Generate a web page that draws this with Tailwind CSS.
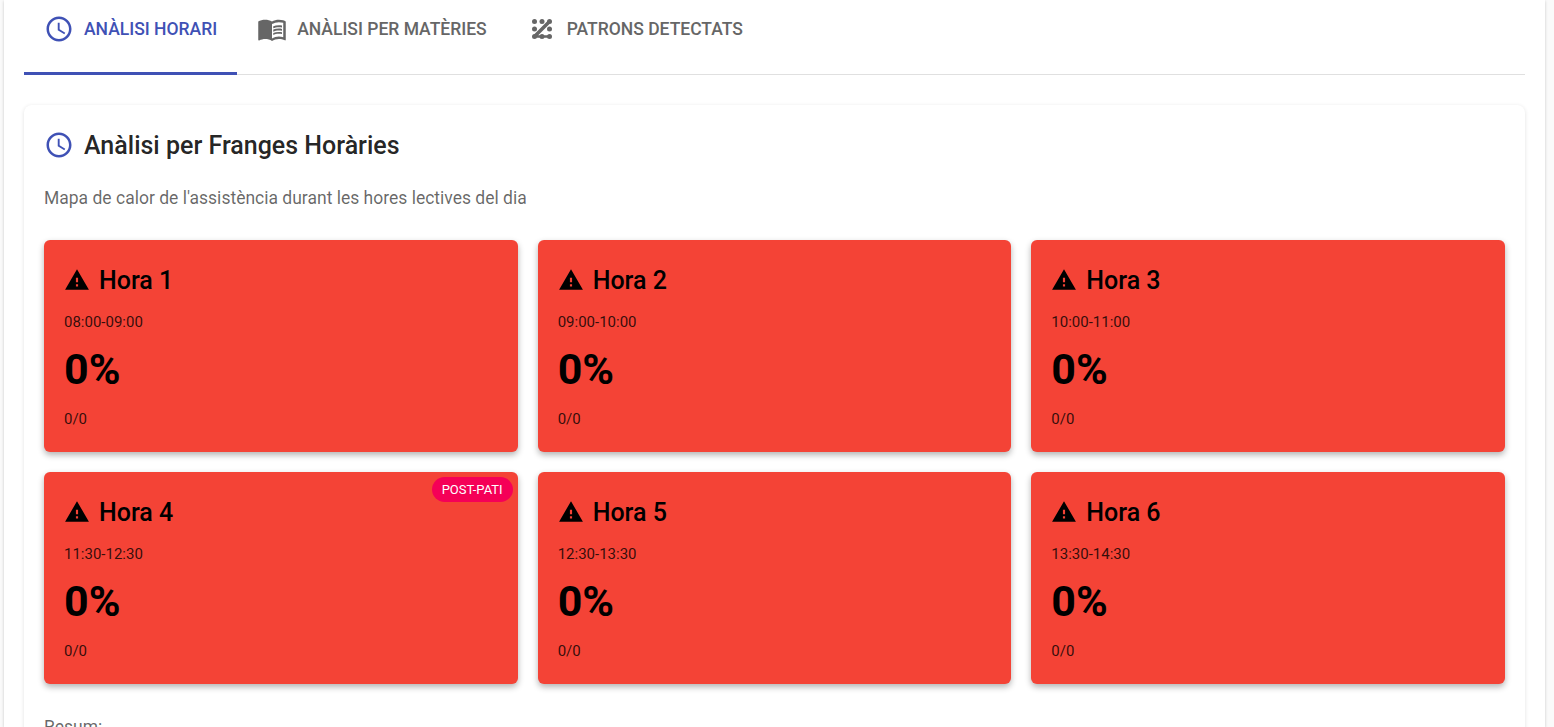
<!DOCTYPE html>
<html lang="ca">
<head>
  <meta charset="UTF-8">
  <meta name="viewport" content="width=device-width, initial-scale=1.0">
  <title>Anàlisi horari</title>
  <script src="https://cdn.jsdelivr.net/npm/@tailwindcss/browser@4"></script>
</head>
<body class="bg-[#fafafa] h-[727px] overflow-hidden font-['Roboto',sans-serif] text-[#000000de]">
  <div class="ml-[4px] w-[1541px] h-[727px] bg-white overflow-hidden px-[20px] shadow-[0_1px_3px_rgba(0,0,0,0.2)]">
    <!-- tabs -->
    <div class="flex h-[75px] border-b border-[#e0e0e0]">
      <div class="flex items-center gap-[10px] h-[75px] px-[20px] pb-[14px] border-b-[3px] border-[#3f51b5] text-[#3f51b5]">
        <svg class="w-[30px] h-[30px] fill-current" viewBox="0 0 24 24"><path d="M11.99 2C6.47 2 2 6.48 2 12s4.47 10 9.99 10C17.52 22 22 17.52 22 12S17.52 2 11.99 2zM12 20c-4.42 0-8-3.58-8-8s3.58-8 8-8 8 3.58 8 8-3.58 8-8 8z"/><path d="M12.5 7H11v6l5.25 3.15.75-1.23-4.5-2.67z"/></svg>
        <span class="text-[17.5px] font-medium">ANÀLISI HORARI</span>
      </div>
      <div class="flex items-center gap-[10px] h-[75px] px-[20px] pb-[14px] border-b-[3px] border-transparent text-[#666666]">
        <svg class="w-[30px] h-[30px] fill-current" viewBox="0 0 24 24"><path d="M21 5c-1.11-.35-2.33-.5-3.5-.5-1.95 0-4.05.4-5.5 1.5-1.45-1.1-3.55-1.5-5.5-1.5S2.45 4.9 1 6v14.65c0 .25.25.5.5.5.1 0 .15-.05.25-.05C3.1 20.45 5.05 20 6.5 20c1.95 0 4.05.4 5.5 1.5 1.35-.85 3.8-1.5 5.5-1.5 1.65 0 3.35.3 4.75 1.05.1.05.15.05.25.05.25 0 .5-.25.5-.5V6c-.6-.45-1.25-.75-2-1zm0 13.5c-1.1-.35-2.3-.5-3.5-.5-1.7 0-4.15.65-5.5 1.5V8c1.35-.85 3.8-1.5 5.5-1.5 1.2 0 2.4.15 3.5.5v11.5z"/><path d="M17.5 10.5c.88 0 1.73.09 2.5.26V9.24c-.79-.15-1.64-.24-2.5-.24-1.7 0-3.24.29-4.5.83v1.66c1.13-.64 2.7-.99 4.5-.99zM13 12.49v1.66c1.13-.64 2.7-.99 4.5-.99.88 0 1.73.09 2.5.26V11.9c-.79-.15-1.64-.24-2.5-.24-1.7 0-3.24.3-4.5.83zM17.5 14.33c-1.7 0-3.24.29-4.5.83v1.66c1.13-.64 2.7-.99 4.5-.99.88 0 1.73.09 2.5.26v-1.52c-.79-.16-1.64-.24-2.5-.24z"/></svg>
        <span class="text-[17.5px] font-medium">ANÀLISI PER MATÈRIES</span>
      </div>
      <div class="flex items-center gap-[10px] h-[75px] px-[20px] pb-[14px] border-b-[3px] border-transparent text-[#666666]">
        <svg class="w-[30px] h-[30px] fill-current" viewBox="0 0 24 24"><circle cx="6" cy="6" r="2"/><circle cx="12" cy="6" r="2"/><circle cx="18" cy="6" r="2"/><circle cx="6" cy="12" r="2"/><circle cx="18" cy="12" r="2"/><circle cx="6" cy="18" r="2"/><circle cx="12" cy="18" r="2"/><circle cx="18" cy="18" r="2"/><path d="M5 17 17 5l2 2L7 19zM6 17h12v2H6z"/></svg>
        <span class="text-[17.5px] font-medium">PATRONS DETECTATS</span>
      </div>
    </div>

    <!-- card -->
    <div class="mt-[30px] rounded-[8px] bg-white shadow-[0_1px_4px_rgba(0,0,0,0.12)] px-[20px] pt-[21px] pb-[20px]">
      <div class="flex items-center gap-[10px] h-[40px]">
        <svg class="w-[30px] h-[30px] mt-[-2px] text-[#3f51b5] fill-current" viewBox="0 0 24 24"><path d="M11.99 2C6.47 2 2 6.48 2 12s4.47 10 9.99 10C17.52 22 22 17.52 22 12S17.52 2 11.99 2zM12 20c-4.42 0-8-3.58-8-8s3.58-8 8-8 8 3.58 8 8-3.58 8-8 8z"/><path d="M12.5 7H11v6l5.25 3.15.75-1.23-4.5-2.67z"/></svg>
        <h2 class="text-[25px] font-medium text-[#000000de]">Anàlisi per Franges Horàries</h2>
      </div>
      <p class="mt-[20px] text-[17.5px] leading-[25px] text-[#00000099]">Mapa de calor de l'assistència durant les hores lectives del dia</p>

      <div class="mt-[29px] grid grid-cols-3 gap-[20px]">
        <div class="relative h-[212px] rounded-[6px] bg-[#f44336] shadow-[0_3px_6px_rgba(0,0,0,0.3)] px-[20px] pt-[21px] text-black">
          <div class="flex items-center gap-[9px] h-[40px]">
            <svg class="w-[26px] h-[26px] mb-[3px] fill-black" viewBox="0 0 24 24"><path d="M1 21h22L12 2 1 21zm12-3h-2v-2h2v2zm0-4h-2v-4h2v4z"/></svg>
            <span class="text-[25px] font-medium">Hora 1</span>
          </div>
          <p class="mt-[11px] text-[15px] leading-[20px] text-[#000000cc]">08:00-09:00</p>
          <p class="mt-[9px] text-[43px] leading-[56px] font-bold">0%</p>
          <p class="mt-[12px] text-[15px] leading-[20px] text-[#000000cc]">0/0</p>
        </div>
        <div class="relative h-[212px] rounded-[6px] bg-[#f44336] shadow-[0_3px_6px_rgba(0,0,0,0.3)] px-[20px] pt-[21px] text-black">
          <div class="flex items-center gap-[9px] h-[40px]">
            <svg class="w-[26px] h-[26px] mb-[3px] fill-black" viewBox="0 0 24 24"><path d="M1 21h22L12 2 1 21zm12-3h-2v-2h2v2zm0-4h-2v-4h2v4z"/></svg>
            <span class="text-[25px] font-medium">Hora 2</span>
          </div>
          <p class="mt-[11px] text-[15px] leading-[20px] text-[#000000cc]">09:00-10:00</p>
          <p class="mt-[9px] text-[43px] leading-[56px] font-bold">0%</p>
          <p class="mt-[12px] text-[15px] leading-[20px] text-[#000000cc]">0/0</p>
        </div>
        <div class="relative h-[212px] rounded-[6px] bg-[#f44336] shadow-[0_3px_6px_rgba(0,0,0,0.3)] px-[20px] pt-[21px] text-black">
          <div class="flex items-center gap-[9px] h-[40px]">
            <svg class="w-[26px] h-[26px] mb-[3px] fill-black" viewBox="0 0 24 24"><path d="M1 21h22L12 2 1 21zm12-3h-2v-2h2v2zm0-4h-2v-4h2v4z"/></svg>
            <span class="text-[25px] font-medium">Hora 3</span>
          </div>
          <p class="mt-[11px] text-[15px] leading-[20px] text-[#000000cc]">10:00-11:00</p>
          <p class="mt-[9px] text-[43px] leading-[56px] font-bold">0%</p>
          <p class="mt-[12px] text-[15px] leading-[20px] text-[#000000cc]">0/0</p>
        </div>
        <div class="relative h-[212px] rounded-[6px] bg-[#f44336] shadow-[0_3px_6px_rgba(0,0,0,0.3)] px-[20px] pt-[21px] text-black">
          <span class="absolute top-[5px] right-[5px] h-[25px] px-[10px] flex items-center rounded-full bg-[#f50057] text-white text-[13px]">POST-PATI</span>
          <div class="flex items-center gap-[9px] h-[40px]">
            <svg class="w-[26px] h-[26px] mb-[3px] fill-black" viewBox="0 0 24 24"><path d="M1 21h22L12 2 1 21zm12-3h-2v-2h2v2zm0-4h-2v-4h2v4z"/></svg>
            <span class="text-[25px] font-medium">Hora 4</span>
          </div>
          <p class="mt-[11px] text-[15px] leading-[20px] text-[#000000cc]">11:30-12:30</p>
          <p class="mt-[9px] text-[43px] leading-[56px] font-bold">0%</p>
          <p class="mt-[12px] text-[15px] leading-[20px] text-[#000000cc]">0/0</p>
        </div>
        <div class="relative h-[212px] rounded-[6px] bg-[#f44336] shadow-[0_3px_6px_rgba(0,0,0,0.3)] px-[20px] pt-[21px] text-black">
          <div class="flex items-center gap-[9px] h-[40px]">
            <svg class="w-[26px] h-[26px] mb-[3px] fill-black" viewBox="0 0 24 24"><path d="M1 21h22L12 2 1 21zm12-3h-2v-2h2v2zm0-4h-2v-4h2v4z"/></svg>
            <span class="text-[25px] font-medium">Hora 5</span>
          </div>
          <p class="mt-[11px] text-[15px] leading-[20px] text-[#000000cc]">12:30-13:30</p>
          <p class="mt-[9px] text-[43px] leading-[56px] font-bold">0%</p>
          <p class="mt-[12px] text-[15px] leading-[20px] text-[#000000cc]">0/0</p>
        </div>
        <div class="relative h-[212px] rounded-[6px] bg-[#f44336] shadow-[0_3px_6px_rgba(0,0,0,0.3)] px-[20px] pt-[21px] text-black">
          <div class="flex items-center gap-[9px] h-[40px]">
            <svg class="w-[26px] h-[26px] mb-[3px] fill-black" viewBox="0 0 24 24"><path d="M1 21h22L12 2 1 21zm12-3h-2v-2h2v2zm0-4h-2v-4h2v4z"/></svg>
            <span class="text-[25px] font-medium">Hora 6</span>
          </div>
          <p class="mt-[11px] text-[15px] leading-[20px] text-[#000000cc]">13:30-14:30</p>
          <p class="mt-[9px] text-[43px] leading-[56px] font-bold">0%</p>
          <p class="mt-[12px] text-[15px] leading-[20px] text-[#000000cc]">0/0</p>
        </div>
      </div>

      <p class="mt-[31px] text-[17.5px] leading-[25px] text-[#00000099]">Resum:</p>
    </div>
  </div>
</body>
</html>
